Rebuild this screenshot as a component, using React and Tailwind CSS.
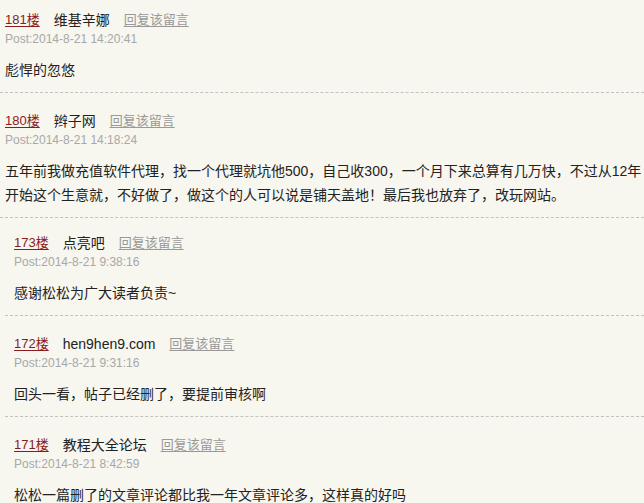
const font = { fontFamily: '"Liberation Sans", Arial, "Noto Sans CJK SC", sans-serif' }

const topComments = [
  {
    floor: "181楼",
    name: "维基辛娜",
    time: "Post:2014-8-21 14:20:41",
    text: "彪悍的忽悠",
  },
  {
    floor: "180楼",
    name: "辫子网",
    time: "Post:2014-8-21 14:18:24",
    text: "五年前我做充值软件代理，找一个代理就坑他500，自己收300，一个月下来总算有几万快，不过从12年开始这个生意就，不好做了，做这个的人可以说是铺天盖地！最后我也放弃了，改玩网站。",
  },
]

const replies = [
  {
    floor: "173楼",
    name: "点亮吧",
    time: "Post:2014-8-21 9:38:16",
    text: "感谢松松为广大读者负责~",
  },
  {
    floor: "172楼",
    name: "hen9hen9.com",
    time: "Post:2014-8-21 9:31:16",
    text: "回头一看，帖子已经删了，要提前审核啊",
  },
  {
    floor: "171楼",
    name: "教程大全论坛",
    time: "Post:2014-8-21 8:42:59",
    text: "松松一篇删了的文章评论都比我一年文章评论多，这样真的好吗",
  },
]

function Comment({ c, top, nested }) {
  return (
    <div
      className={`border-b border-dashed border-[#c4c2bc] pb-[10px] ${top} ${nested ? "pl-[9px]" : "pl-[5px]"}`}
    >
      <div className="flex items-center gap-[14px] h-[20px]">
        <a href="#" className="text-[13px] text-[#8b1c1c] underline underline-offset-2">
          {c.floor}
        </a>
        <span className="text-[14px] text-[#222]">{c.name}</span>
        <a href="#" className="text-[13px] text-[#999] underline underline-offset-2">
          回复该留言
        </a>
      </div>
      <div className="text-[12px] leading-[18px] text-[#a8a8a8]">{c.time}</div>
      <p className="mt-[10px] text-[14px] leading-[24px] text-[#222] pr-[2px]">{c.text}</p>
    </div>
  )
}

export default function App() {
  return (
    <div className="min-h-screen w-[644px] bg-[#f7f6ef] overflow-hidden" style={font}>
      {topComments.map((c, i) => (
        <Comment key={c.floor} c={c} top={i === 0 ? "pt-[10px]" : "pt-[18px]"} />
      ))}
      <div className="ml-[5px]">
        {replies.map((c, i) => (
          <Comment key={c.floor} c={c} top={i === 0 ? "pt-[15px]" : "pt-[18px]"} nested />
        ))}
      </div>
    </div>
  )
}
